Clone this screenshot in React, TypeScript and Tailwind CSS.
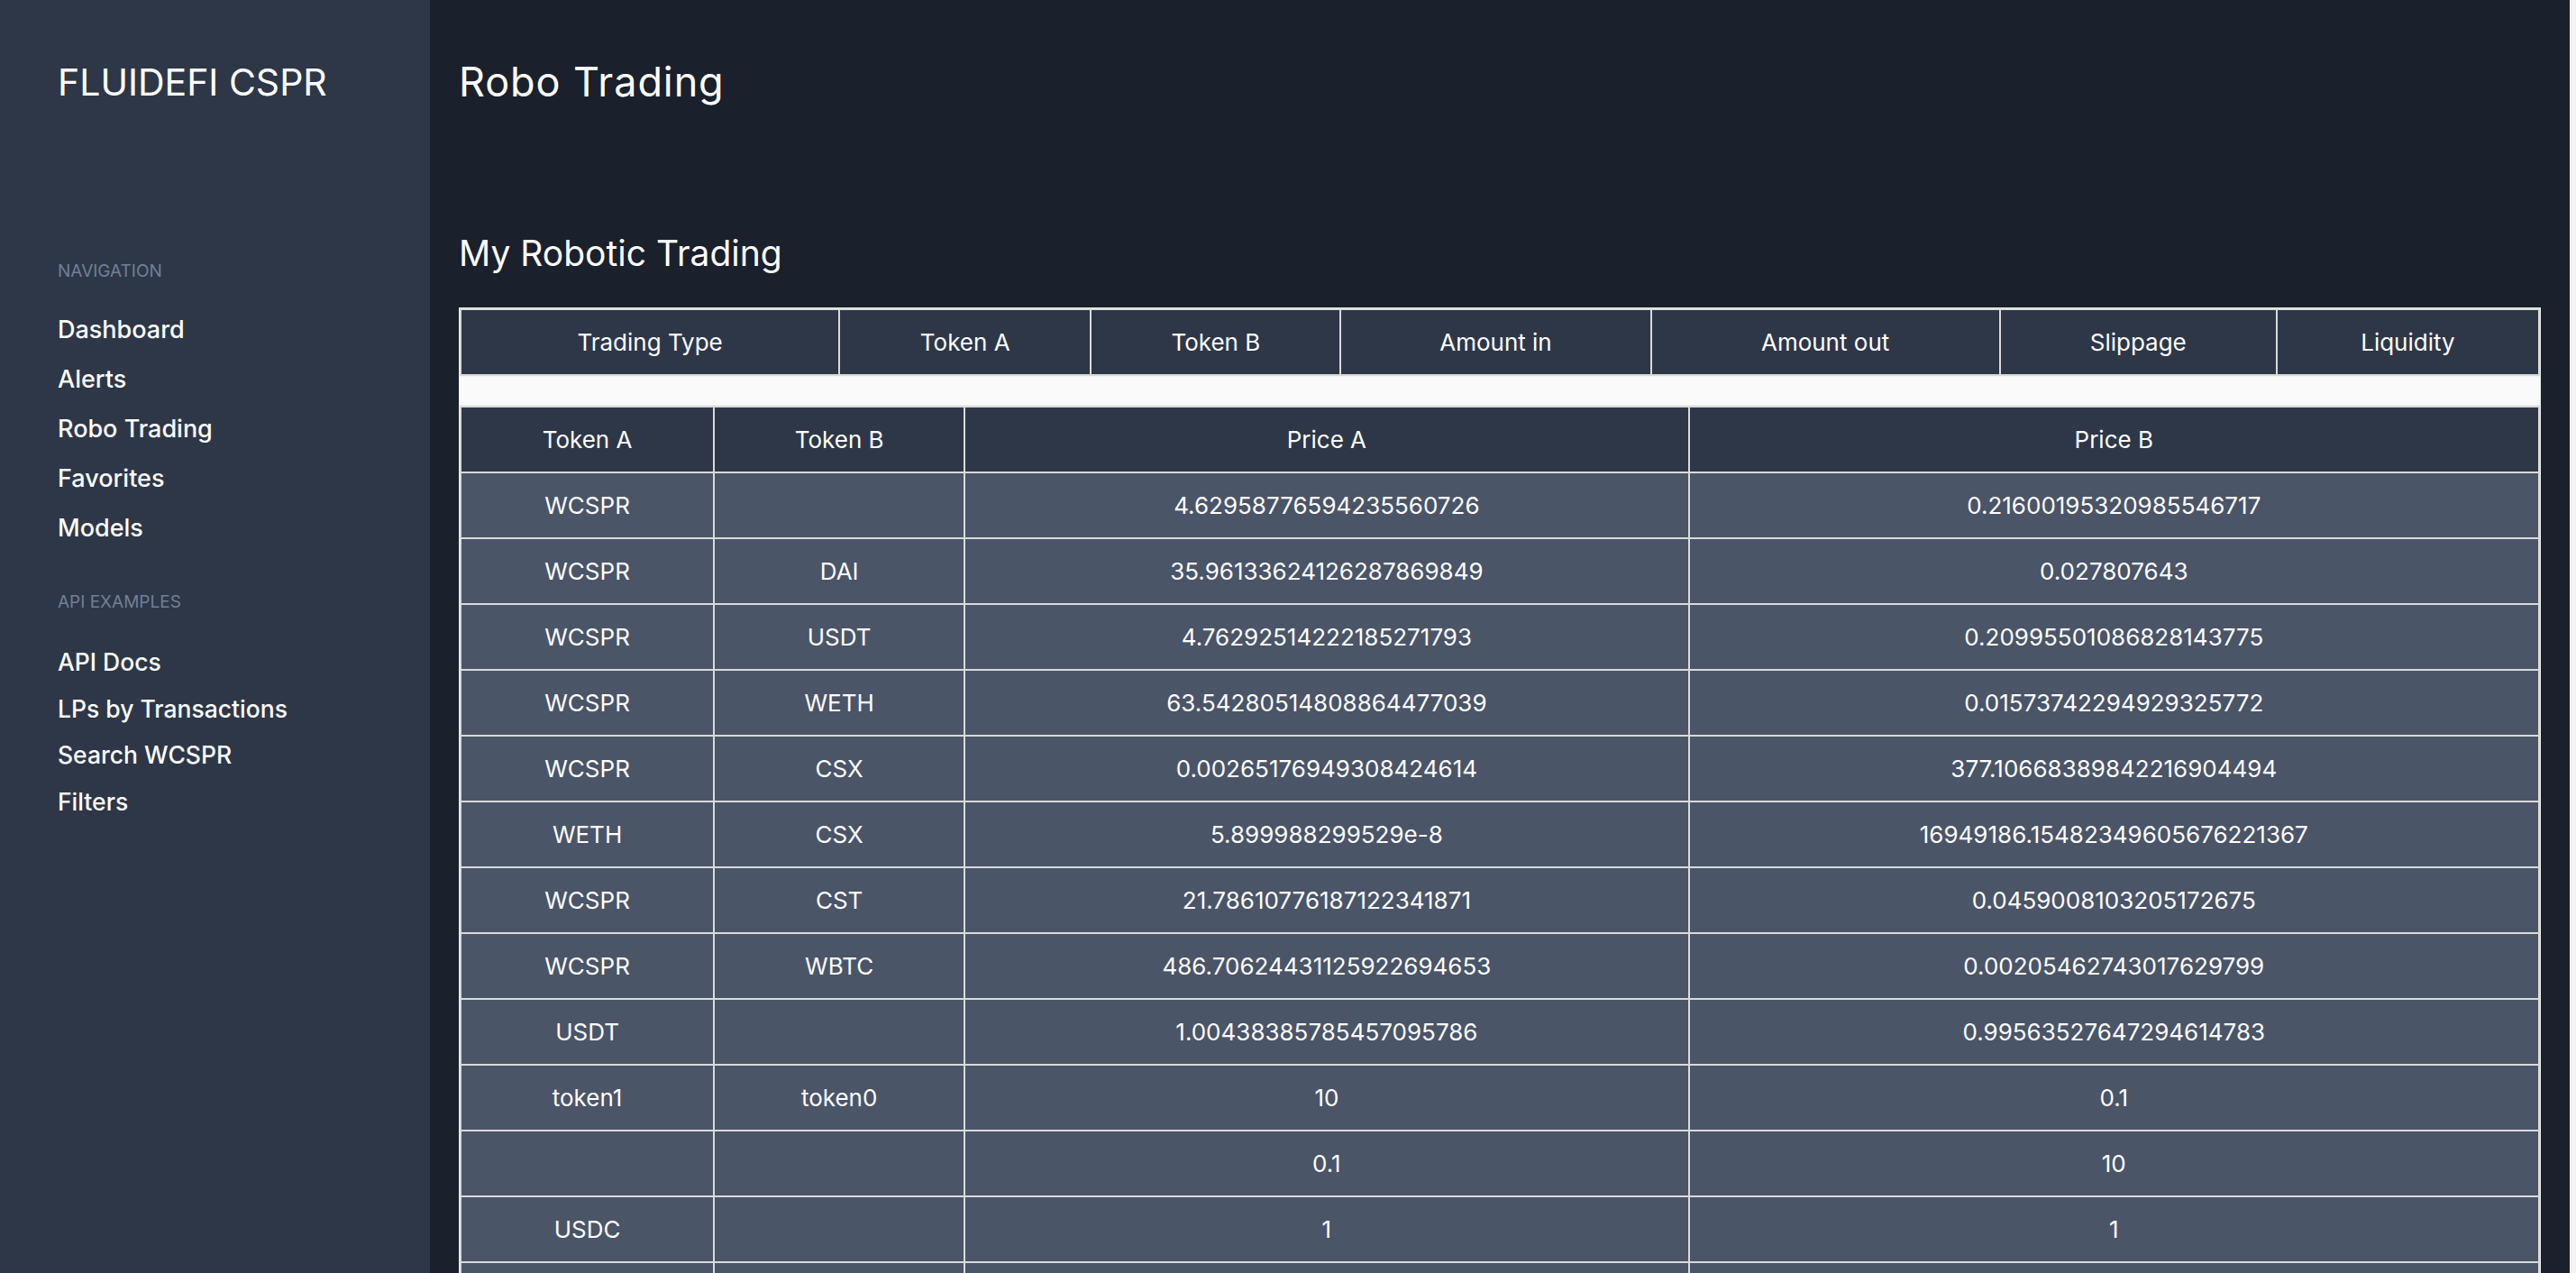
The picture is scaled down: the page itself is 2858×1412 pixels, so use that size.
const navMain = ["Dashboard", "Alerts", "Robo Trading", "Favorites", "Models"];
const navApi = ["API Docs", "LPs by Transactions", "Search WCSPR", "Filters"];

const tradeCols = [
  { label: "Trading Type", w: "w-[418px]" },
  { label: "Token A", w: "w-[277px]" },
  { label: "Token B", w: "w-[275px]" },
  { label: "Amount in", w: "w-[342px]" },
  { label: "Amount out", w: "w-[385px]" },
  { label: "Slippage", w: "w-[305px]" },
  { label: "Liquidity", w: "w-[289px]" },
];

const priceCols = [
  { label: "Token A", w: "w-[279px]" },
  { label: "Token B", w: "w-[276px]" },
  { label: "Price A", w: "w-[801px]" },
  { label: "Price B", w: "w-[941px]" },
];

const prices: [string, string, string, string][] = [
  ["WCSPR", "", "4.62958776594235560726", "0.21600195320985546717"],
  ["WCSPR", "DAI", "35.96133624126287869849", "0.027807643"],
  ["WCSPR", "USDT", "4.76292514222185271793", "0.20995501086828143775"],
  ["WCSPR", "WETH", "63.54280514808864477039", "0.01573742294929325772"],
  ["WCSPR", "CSX", "0.00265176949308424614", "377.10668389842216904494"],
  ["WETH", "CSX", "5.899988299529e-8", "16949186.15482349605676221367"],
  ["WCSPR", "CST", "21.78610776187122341871", "0.0459008103205172675"],
  ["WCSPR", "WBTC", "486.70624431125922694653", "0.00205462743017629799"],
  ["USDT", "", "1.00438385785457095786", "0.99563527647294614783"],
  ["token1", "token0", "10", "0.1"],
  ["", "", "0.1", "10"],
  ["USDC", "", "1", "1"],
  ["WCSPR", "USDC", "4.75812003218562201245", "0.21016721893417063512"],
];

function Sidebar() {
  return (
    <aside className="w-[477px] shrink-0 bg-[#2d3748] pl-[64px] pt-[69px] text-white">
      <div className="text-[41px] leading-[44px]">FLUIDEFI CSPR</div>

      <div className="mt-[178px] text-[19px] leading-[19px] uppercase text-[#718096]">
        Navigation
      </div>
      <nav className="mt-[28px] flex flex-col">
        {navMain.map((item) => (
          <a key={item} href="#" className="text-[27px] leading-[55px] font-medium">
            {item}
          </a>
        ))}
      </nav>

      <div className="mt-[45px] text-[19px] leading-[19px] uppercase text-[#718096]">
        API Examples
      </div>
      <nav className="mt-[32px] flex flex-col">
        {navApi.map((item) => (
          <a key={item} href="#" className="text-[26.5px] leading-[51.5px] font-medium">
            {item}
          </a>
        ))}
      </nav>
    </aside>
  );
}

function TradingTable() {
  return (
    <div className="border border-[#efefef] bg-[#fafafa]">
      {/* robo trades */}
      <table className="w-full table-fixed border-separate border-spacing-[2px] bg-[#dadada]">
        <colgroup>
          {tradeCols.map((c) => (
            <col key={c.label} className={c.w} />
          ))}
        </colgroup>
        <thead>
          <tr>
            {tradeCols.map((c) => (
              <th key={c.label} className="h-[71px] bg-[#2d3748] text-center text-[26px] font-normal">
                {c.label}
              </th>
            ))}
          </tr>
        </thead>
      </table>

      <div className="h-[32px] border-t border-[#f2f2f2] bg-[#fafafa]" />

      {/* token prices */}
      <table className="w-full table-fixed border-separate border-spacing-[2px] border-t border-[#efefef] bg-[#dadada]">
        <colgroup>
          {priceCols.map((c) => (
            <col key={c.label} className={c.w} />
          ))}
        </colgroup>
        <thead>
          <tr>
            {priceCols.map((c) => (
              <th key={c.label} className="h-[71px] bg-[#2d3748] text-center text-[26px] font-normal">
                {c.label}
              </th>
            ))}
          </tr>
        </thead>
        <tbody>
          {prices.map((row, i) => (
            <tr key={i}>
              {row.map((cell, j) => (
                <td key={j} className="h-[71px] bg-[#4a5568] text-center text-[26px]">
                  {cell}
                </td>
              ))}
            </tr>
          ))}
        </tbody>
      </table>
    </div>
  );
}

export default function App() {
  return (
    <div
      className="flex min-h-screen bg-[#1a202c] text-white"
      style={{ fontFamily: "Inter, 'Noto Sans', sans-serif" }}
    >
      <Sidebar />
      <main className="min-w-0 flex-1 px-[32px] pt-[69px] pb-[40px]">
        <h1 className="text-[45px] leading-[44px] tracking-[0.02em]">Robo Trading</h1>
        <h2 className="mt-[149px] text-[39px] leading-[38px]">My Robotic Trading</h2>
        <div className="mt-[41px]">
          <TradingTable />
        </div>
      </main>
      {/* scrollbar track */}
      <div className="w-[7px] shrink-0 bg-[#f3f3f3]" />
    </div>
  );
}
